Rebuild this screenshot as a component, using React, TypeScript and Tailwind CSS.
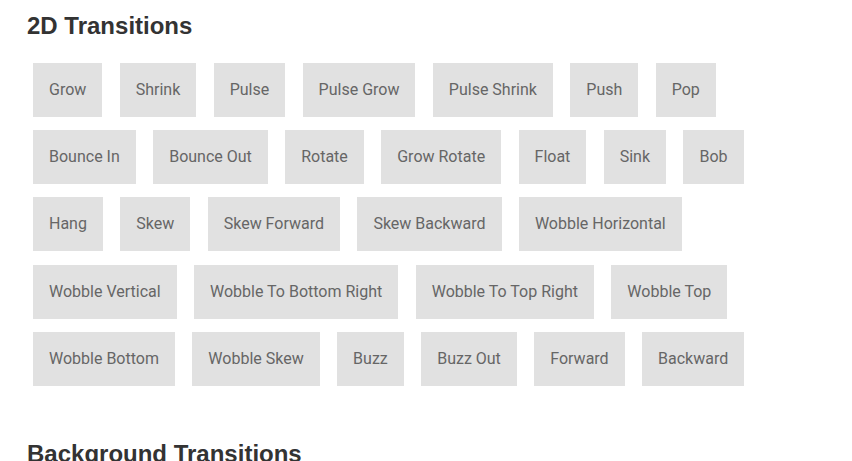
const sections: { title: string; items: string[] }[] = [
  {
    title: "2D Transitions",
    items: [
      "Grow", "Shrink", "Pulse", "Pulse Grow", "Pulse Shrink", "Push", "Pop",
      "Bounce In", "Bounce Out", "Rotate", "Grow Rotate", "Float", "Sink", "Bob",
      "Hang", "Skew", "Skew Forward", "Skew Backward", "Wobble Horizontal",
      "Wobble Vertical", "Wobble To Bottom Right", "Wobble To Top Right", "Wobble Top",
      "Wobble Bottom", "Wobble Skew", "Buzz", "Buzz Out", "Forward", "Backward",
    ],
  },
  {
    title: "Background Transitions",
    items: ["Fade", "Back Pulse", "Sweep To Right", "Sweep To Left", "Sweep To Bottom"],
  },
];

export default function App() {
  return (
    <div className="w-[852px] h-[461px] overflow-hidden bg-white">
      <div className="pt-[12px] w-[800px]">
        {sections.map((s) => (
          <section key={s.title} className="mb-[54px]">
            <h2
              className="ml-[27px] text-[24px] leading-[28px] font-bold text-[#333]"
              style={{ fontFamily: '"Liberation Sans", Arial, sans-serif' }}
            >
              {s.title}
            </h2>
            <div className="mt-[23px] ml-[33px] flex flex-wrap gap-x-[17.4px] gap-y-[13.2px]">
              {s.items.map((item) => (
                <button
                  key={item}
                  className="bg-[#e1e1e1] text-[#666] text-[16px] leading-[22px] px-4 py-4 cursor-pointer"
                  style={{ fontFamily: "Roboto, sans-serif" }}
                >
                  {item}
                </button>
              ))}
            </div>
          </section>
        ))}
      </div>
    </div>
  );
}
